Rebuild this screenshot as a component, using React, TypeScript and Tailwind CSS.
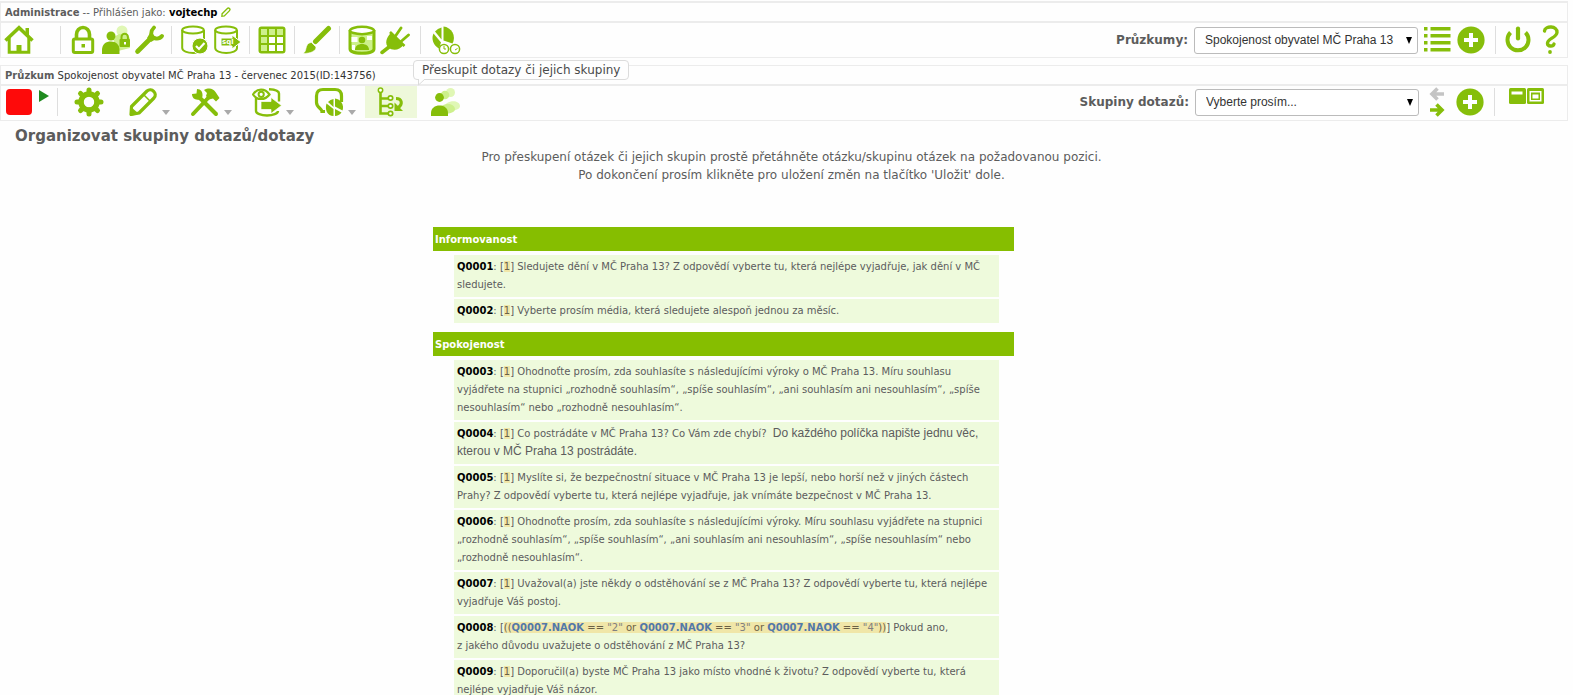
import React from 'react';

const GREEN = '#86be0a';
const LIGHT = '#cdf08c';

interface IconProps {
  children: React.ReactNode;
}

// Shared 30x30 canvas for the toolbar drawings
const Icon: React.FC<IconProps> = ({ children }) => (
  <svg width="30" height="30" viewBox="0 0 30 30" fill="none" className="shrink-0" aria-hidden="true">
    {children}
  </svg>
);

const HomeIcon = () => (
  <Icon>
    <path d="M1.5 15.5L15 2.8l13.5 12.7" stroke={GREEN} strokeWidth="3.6" />
    <path d="M21.5 3H25v8l-3.5-3z" fill={GREEN} />
    <path d="M5.2 13v14.3h19.6V13" stroke={GREEN} strokeWidth="3" />
    <path d="M12.5 20h5v6h-5z" fill={GREEN} />
  </Icon>
);

const LockIcon = () => (
  <Icon>
    <path d="M8.5 14V9.5a6.5 7 0 0 1 13 0V14" stroke={GREEN} strokeWidth="3.6" />
    <rect x="5.3" y="14" width="19.4" height="13.5" rx="1.5" stroke={GREEN} strokeWidth="3" />
    <rect x="13.5" y="19" width="3.5" height="3.5" fill={GREEN} />
  </Icon>
);

const UserLockIcon = () => (
  <Icon>
    <circle cx="21" cy="6" r="5.5" fill="#e0f7b5" />
    <path d="M12 14c4-7 15-7 17 0v9l-12 3z" fill={LIGHT} />
    <circle cx="10" cy="11" r="4.5" fill={GREEN} />
    <path d="M1 29v-4c0-6 4-8.5 9-8.5s8.5 3 8.5 8.5v4z" fill={GREEN} />
    <path d="M20.5 15v-3a3.2 3.2 0 0 1 6.4 0v3" stroke={GREEN} strokeWidth="2" />
    <rect x="18.5" y="14" width="10.5" height="8" rx="1" fill={GREEN} />
    <rect x="23" y="17" width="2" height="2.5" fill="#fff" />
  </Icon>
);

const WrenchIcon = () => (
  <Icon>
    <path d="M3.5 26.5L18 12" stroke={GREEN} strokeWidth="4.6" strokeLinecap="round" />
    <path d="M20 2.5c-4.500 4.500-3 10.500 2 11 2.500.3 4.500-.5 6-2.500" stroke={GREEN} strokeWidth="3.8" strokeLinecap="round" />
    <path d="M16 8l6 6-5 3-4-4z" fill={GREEN} />
  </Icon>
);

const Cylinder = () => (
  <>
    <ellipse cx="14" cy="5" rx="10.8" ry="3.5" stroke={GREEN} strokeWidth="2" />
    <path d="M3.2 5v18c0 3 5 5 11 5S25 26 25 23V5" stroke={GREEN} strokeWidth="2" />
  </>
);

const DbCheckIcon = () => (
  <Icon>
    <Cylinder />
    <circle cx="21" cy="21" r="8" fill={GREEN} stroke="#fff" />
    <path d="M17 21l3 3 5.5-6" stroke="#fff" strokeWidth="2.2" />
  </Icon>
);

const DbSqlIcon = () => (
  <Icon>
    <Cylinder />
    <path d="M9 13h11v-3l9 7-9 7v-3H9z" fill={GREEN} stroke="#fff" />
    <text x="10" y="19" fontSize="7" fontWeight="bold" fill="#fff" className="font-['DejaVu_Sans',sans-serif]">
      sql
    </text>
  </Icon>
);

const GridIcon = () => (
  <Icon>
    <rect x="1.5" y="1.5" width="27" height="27" rx="3" fill={GREEN} />
    {[4, 12, 20].map((y) =>
      [4, 12, 20].map((x) => (
        <rect key={`${x}-${y}`} x={x} y={y} width="6" height="6" fill={x === 4 || y === 4 ? LIGHT : '#fff'} />
      ))
    )}
  </Icon>
);

const BrushIcon = () => (
  <Icon>
    <path d="M13.5 16.5l13-13" stroke={GREEN} strokeWidth="5" strokeLinecap="round" />
    <path
      d="M9.5 17.5L14 22c0 4-5 6.5-13 6.500 3-2 2.500-4 3.500-7s3-4 5-4z"
      fill={GREEN}
      stroke="#fff"
      strokeWidth=".6"
    />
  </Icon>
);

const StorageIcon = () => (
  <Icon>
    <path d="M3 5v19c0 2.5 5 4.3 12 4.3S27 26.5 27 24V5" fill={LIGHT} stroke={GREEN} strokeWidth="3" />
    <ellipse cx="15" cy="5.5" rx="12" ry="3.7" fill="#fff" stroke={GREEN} strokeWidth="2.600" />
    <path d="M4.5 12h6v5h-6zM20 11h5v4h-5zM5 20h3v5H5z" fill="#fff" />
    <circle cx="15" cy="15" r="3.3" fill={GREEN} />
    <path d="M8 25c0-4 3-6 7-6s7 2 7 6z" fill={GREEN} />
  </Icon>
);

const PlugIcon = () => (
  <Icon>
    <path d="M2 27.500l7-5.500" stroke={GREEN} strokeWidth="3.500" strokeLinecap="round" />
    <path d="M11 8l12.500 12c-4 5.500-11 6-15 2.500S6 12.500 11 8z" fill={GREEN} />
    <path d="M10 7l14.500 14" stroke={GREEN} strokeWidth="2.600" />
    <path d="M15.500 11l5.500-8M21 16.500l7.500-6.500" stroke={GREEN} strokeWidth="2.800" strokeLinecap="round" />
  </Icon>
);

const PieClockIcon = () => (
  <Icon>
    <path d="M10.5 2.500v12L4 6.500a12 12 0 0 1 6.500-4z" fill={GREEN} />
    <path d="M12.5 1.500a11.500 11.500 0 0 1 9 17l-9-3z" fill={GREEN} />
    <path d="M2.5 8.500l7.500 9-2 6a11.500 11.500 0 0 1-5.500-15z" fill={GREEN} />
    <circle cx="13" cy="24" r="4.600" fill="#fff" stroke={GREEN} strokeWidth="1.500" />
    <circle cx="24" cy="24" r="4.600" fill="#fff" stroke={GREEN} strokeWidth="1.500" />
    <path d="M13 21v3h2M24 25l2.500-1.500" stroke={GREEN} />
  </Icon>
);

const GearIcon = () => (
  <Icon>
    {[0, 45, 90, 135].map((a) => (
      <path
        key={a}
        d="M15 3v4M15 27v-4"
        stroke={GREEN}
        strokeWidth="5"
        strokeLinecap="round"
        transform={`rotate(${a} 15 15)`}
      />
    ))}
    <circle cx="15" cy="15" r="8" stroke={GREEN} strokeWidth="5.500" />
  </Icon>
);

const PencilIcon = () => (
  <Icon>
    <path d="M3.500 19.500L19 4c4.500-4 11 2.500 7 7L11 26l-8 1.500z" stroke={GREEN} strokeWidth="3.200" strokeLinejoin="round" />
    <path d="M2 19l9 8-9 2z" fill={GREEN} />
    <path d="M16 8l6 6" stroke={GREEN} strokeWidth="1.500" />
  </Icon>
);

const ToolsIcon = () => (
  <Icon>
    <path d="M9.500 10.500L26 27" stroke={GREEN} strokeWidth="4" strokeLinecap="round" />
    <path d="M3 27L20 9" stroke={GREEN} strokeWidth="4" strokeLinecap="round" />
    <path d="M7 2l-.5 4.500L2 7c0 4 3 6.500 7.500 5.500l3-3C13 5 11 2 7 2z" fill={GREEN} />
    <path d="M14 3c5-2.500 9-1.500 11.500 2l4 6-3.500 3.500-3-3-4 1-3-3.500 1-3z" fill={GREEN} />
  </Icon>
);

const EyeExportIcon = () => (
  <Icon>
    <path d="M4 10v14c0 2.500 5 4.500 11 4.500s11-2 11-4.500M17 2.200c6 .3 10 1.800 10 4.300v8" stroke={GREEN} strokeWidth="2.400" />
    <path d="M1 7.500C5 1 13 1 17.500 7.500 13 13.500 5 13.500 1 7.500z" fill="#fff" stroke={GREEN} strokeWidth="2.200" />
    <circle cx="9.200" cy="7.300" r="2.600" stroke={GREEN} strokeWidth="2" />
    <path d="M9 14.500h10v-4l10.500 8-10.500 8v-4H9z" fill={GREEN} stroke="#fff" strokeWidth=".7" />
  </Icon>
);

const PieFrameIcon = () => (
  <Icon>
    <path
      d="M11 24.500H8c0-3-5.500-4-5.500-9V9c0-5 2.500-6.500 6.500-6.500h12c4 0 6.500 1.500 6.500 6.500v6"
      stroke={GREEN}
      strokeWidth="3.200"
    />
    <path d="M19.500 12v8L14 15a9 9 0 0 1 5.500-3z" fill={GREEN} />
    <path d="M21 11.500a9 9 0 0 1 7.500 12l-7.500-4z" fill={GREEN} />
    <path d="M12.500 16.500l7 5.500v7c-6 0-9-6-7-12.500z" fill={GREEN} />
    <path d="M21 22l6.500 3.500C26 27.500 23.500 29 21 29z" fill={GREEN} />
  </Icon>
);

const ReorderIcon = () => (
  <Icon>
    <path d="M4.500 5v21.500H12M4.500 11.500H12M4.500 19H12" stroke={GREEN} strokeWidth="2.600" />
    <circle cx="4.500" cy="3.200" r="2.200" fill="#fff" stroke={GREEN} strokeWidth="1.500" />
    <circle cx="14.500" cy="11" r="2.200" fill="#fff" stroke={GREEN} strokeWidth="1.700" />
    <circle cx="14.500" cy="19" r="2.200" fill="#fff" stroke={GREEN} strokeWidth="1.700" />
    <circle cx="14.500" cy="26.500" r="2.200" fill="#fff" stroke={GREEN} strokeWidth="1.700" />
    <path d="M20 11.500c6 0 7 5.500 2.500 9" stroke={GREEN} strokeWidth="3" />
    <path d="M18.500 15.500V24H27z" fill={GREEN} />
  </Icon>
);

const UsersIcon = () => (
  <Icon>
    <circle cx="20.500" cy="5.500" r="4.500" fill="#e0f7b5" />
    <path d="M14 21c0-7 15-10 16-2 0 3-4 4-8 5z" fill="#e0f7b5" />
    <circle cx="15" cy="8" r="4.300" fill={LIGHT} />
    <path d="M9 24c0-8 15-10 16-2 0 3-4 4-8 5z" fill={LIGHT} />
    <circle cx="9.500" cy="10.500" r="4.400" fill={GREEN} />
    <path d="M1 29v-3c0-5 4-7.500 8.500-7.500S18 21 18 26v3z" fill={GREEN} />
  </Icon>
);

const ListIcon = () => (
  <Icon>
    {[2, 9, 16, 23].map((y) => (
      <path key={y} d={`M1 ${y}h3.500v3.500h-3.500zM7.500 ${y}h20v3.500h-20z`} fill={GREEN} />
    ))}
  </Icon>
);

const PlusIcon = () => (
  <Icon>
    <circle cx="15" cy="15" r="13.600" fill={GREEN} />
    <path d="M15 8v14M8 15h14" stroke="#fff" strokeWidth="4" />
  </Icon>
);

const PowerIcon = () => (
  <Icon>
    <path d="M7.500 7.500a10.500 10.500 0 1 0 15 0" stroke={GREEN} strokeWidth="4" />
    <path d="M15 3.500v10" stroke={GREEN} strokeWidth="4.200" strokeLinecap="round" />
  </Icon>
);

const HelpIcon = () => (
  <Icon>
    <path
      d="M9.500 6C10 .5 22.500.5 22 7.500c-.5 5.500-10 6-9.500 11 .3 3 5.500 3.500 6.500.5"
      stroke={GREEN}
      strokeWidth="3.400"
      strokeLinecap="round"
    />
    <circle cx="15" cy="27" r="1.900" fill={GREEN} />
  </Icon>
);

const SwapIcon = () => (
  <Icon>
    <path d="M22 7H11M15.500 1.500L10 7l5.500 5.500" stroke="#c4c4c4" strokeWidth="3.600" />
    <path d="M8 23h11M14.500 17.500L20 23l-5.500 5.500" stroke={GREEN} strokeWidth="3.600" />
  </Icon>
);

const LayoutIcon = () => (
  <svg width="36" height="17" viewBox="0 0 36 17" fill="none" aria-hidden="true">
    <rect width="17" height="16" rx="1.500" fill={GREEN} />
    <path d="M2.500 3.500h11v3h-11z" fill="#fff" />
    <rect x="18" width="17" height="16" rx="1.500" fill={GREEN} />
    <path d="M20.500 3h12v10.500h-12z" fill="#fff" />
    <path d="M22 4.500h9v7.500h-9z" fill={GREEN} />
    <path d="M23.500 6.500h6v4h-6z" fill="#fff" />
  </svg>
);

interface ToolButtonProps {
  label: string;
  className?: string;
  children: React.ReactNode;
}

const ToolButton: React.FC<ToolButtonProps> = ({ label, className = 'w-[33px]', children }) => (
  <button type="button" aria-label={label} className={`flex h-8 shrink-0 items-center justify-center ${className}`}>
    {children}
  </button>
);

// Icon with the small grey caret of a drop-down menu
const MenuButton: React.FC<ToolButtonProps> = ({ label, children }) => (
  <button type="button" aria-label={label} className="flex h-8 w-[62px] shrink-0 items-center gap-1 pl-3">
    {children}
    <svg width="8" height="5" viewBox="0 0 8 5" className="mt-5" aria-hidden="true">
      <path d="M0 0h8L4 5z" fill="#aaa" />
    </svg>
  </button>
);

const Separator: React.FC<{ className?: string }> = ({ className = 'w-3' }) => (
  <div className={`flex h-7 shrink-0 justify-center ${className}`}>
    <div className="w-px bg-[#dedede]" />
  </div>
);

interface PickerProps {
  id: string;
  label: string;
  value: string;
}

const Picker: React.FC<PickerProps> = ({ id, label, value }) => (
  <>
    <label htmlFor={id} className="mr-1.5 text-[12px] font-bold whitespace-nowrap">
      {label}
    </label>
    <div className="relative">
      <select
        id={id}
        className="block h-[27px] w-56 appearance-none rounded-[3px] border border-[#bbb] bg-white pl-2.5 font-['Liberation_Sans',sans-serif] text-[12px] text-[#333]"
      >
        <option>{value}</option>
      </select>
      <svg width="6" height="7" viewBox="0 0 6 7" className="pointer-events-none absolute top-2.5 right-1.5" aria-hidden="true">
        <path d="M0 0h6L3 7z" fill="#000" />
      </svg>
    </div>
  </>
);

interface Question {
  code: string;
  condition?: React.ReactNode;
  text: React.ReactNode;
}

interface Group {
  title: string;
  questions: Question[];
}

const Var = () => <b className="text-[#5278a8]">Q0007.NAOK</b>;

const groups: Group[] = [
  {
    title: 'Informovanost',
    questions: [
      {
        code: 'Q0001',
        text: 'Sledujete dění v MČ Praha 13? Z odpovědí vyberte tu, která nejlépe vyjadřuje, jak dění v MČ sledujete.',
      },
      { code: 'Q0002', text: 'Vyberte prosím média, která sledujete alespoň jednou za měsíc.' },
    ],
  },
  {
    title: 'Spokojenost',
    questions: [
      {
        code: 'Q0003',
        text: 'Ohodnoťte prosím, zda souhlasíte s následujícími výroky o MČ Praha 13. Míru souhlasu vyjádřete na stupnici „rozhodně souhlasím“, „spíše souhlasím“, „ani souhlasím ani nesouhlasím“, „spíše nesouhlasím“ nebo „rozhodně nesouhlasím“.',
      },
      {
        code: 'Q0004',
        text: (
          <>
            Co postrádáte v MČ Praha 13? Co Vám zde chybí?&nbsp;{' '}
            <span className="font-['Liberation_Sans',sans-serif] text-[12px] leading-none">
              Do každého políčka napište jednu věc, kterou v MČ Praha 13 postrádáte.
            </span>
          </>
        ),
      },
      {
        code: 'Q0005',
        text: 'Myslíte si, že bezpečnostní situace v MČ Praha 13 je lepší, nebo horší než v jiných částech Prahy? Z odpovědí vyberte tu, která nejlépe vyjadřuje, jak vnímáte bezpečnost v MČ Praha 13.',
      },
      {
        code: 'Q0006',
        text: 'Ohodnoťte prosím, zda souhlasíte s následujícími výroky. Míru souhlasu vyjádřete na stupnici „rozhodně souhlasím“, „spíše souhlasím“, „ani souhlasím ani nesouhlasím“, „spíše nesouhlasím“ nebo „rozhodně nesouhlasím“.',
      },
      {
        code: 'Q0007',
        text: 'Uvažoval(a) jste někdy o odstěhování se z MČ Praha 13? Z odpovědí vyberte tu, která nejlépe vyjadřuje Váš postoj.',
      },
      {
        code: 'Q0008',
        condition: (
          <>
            ((
            <Var /> == <i className="text-[#808080] not-italic">"2"</i> or <Var /> =={' '}
            <i className="text-[#808080] not-italic">"3"</i> or <Var /> =={' '}
            <i className="text-[#808080] not-italic">"4"</i>))
          </>
        ),
        text: (
          <>
            Pokud ano,
            <br />
            z jakého důvodu uvažujete o odstěhování z MČ Praha 13?
          </>
        ),
      },
      {
        code: 'Q0009',
        text: 'Doporučil(a) byste MČ Praha 13 jako místo vhodné k životu? Z odpovědí vyberte tu, která nejlépe vyjadřuje Váš názor.',
      },
    ],
  },
];

const QuestionItem: React.FC<{ question: Question }> = ({ question }) => (
  <li className="cursor-move bg-[#eefadc] px-[3px] py-[3px] leading-[18px]">
    <b className="text-black">{question.code}</b>: [
    <span className="bg-[#f0e6a8] text-[#6b6145]">{question.condition ?? '1'}</span>] {question.text}
  </li>
);

const App: React.FC = () => {
  return (
    <div className="h-screen overflow-hidden bg-[#fefefe] pt-px font-['DejaVu_Sans',Verdana,sans-serif] text-[10px] text-[#5c5c5c]">
      {/* Administration bar */}
      <header className="mr-[5px] border border-t-2 border-[#ececec]">
        <div className="flex h-5 items-center border-b-2 border-[#ececec] pl-1">
          <p>
            <b>Administrace</b> -- Přihlášen jako: <b className="text-black">vojtechp</b>
          </p>
          <a href="#profile" aria-label="Upravit profil" className="ml-1">
            <svg width="10" height="10" viewBox="0 0 9 9" fill="none" aria-hidden="true">
              <path d="M1 6l4.500-4.500c1.500-1.500 3.500.5 2 2L3 8l-2.200.3z" stroke={GREEN} strokeWidth="1.200" />
            </svg>
          </a>
        </div>
        <div className="flex h-[34px] items-center">
          <ToolButton label="Domů" className="w-9">
            <HomeIcon />
          </ToolButton>
          <Separator className="w-[47px]" />
          <div className="-ml-[18px] flex items-center">
            <ToolButton label="Oprávnění">
              <LockIcon />
            </ToolButton>
            <ToolButton label="Uživatelé">
              <UserLockIcon />
            </ToolButton>
            <ToolButton label="Nastavení">
              <WrenchIcon />
            </ToolButton>
            <Separator />
            <ToolButton label="Kontrola dat">
              <DbCheckIcon />
            </ToolButton>
            <ToolButton label="Záloha databáze">
              <DbSqlIcon />
            </ToolButton>
            <Separator />
            <ToolButton label="Sady popisků">
              <GridIcon />
            </ToolButton>
            <Separator />
            <ToolButton label="Šablony">
              <BrushIcon />
            </ToolButton>
            <Separator />
            <ToolButton label="Databáze účastníků">
              <StorageIcon />
            </ToolButton>
            <ToolButton label="Moduly">
              <PlugIcon />
            </ToolButton>
            <Separator className="w-[18px]" />
            <ToolButton label="Statistiky">
              <PieClockIcon />
            </ToolButton>
          </div>
          <div className="ml-auto flex items-center pr-px">
            <Picker id="surveys" label="Průzkumy:" value="Spokojenost obyvatel MČ Praha 13" />
            <ToolButton label="Seznam průzkumů" className="ml-[3px] w-[33px]">
              <ListIcon />
            </ToolButton>
            <ToolButton label="Nový průzkum">
              <PlusIcon />
            </ToolButton>
            <Separator className="w-4" />
            <ToolButton label="Odhlásit" className="w-[30px]">
              <PowerIcon />
            </ToolButton>
            <ToolButton label="Nápověda">
              <HelpIcon />
            </ToolButton>
          </div>
        </div>
      </header>

      {/* Survey bar */}
      <nav className="mt-[7px] mr-[5px] border border-[#ececec]">
        <div className="flex h-5 items-center border-b-2 border-[#ececec] pl-1">
          <p>
            <b>Průzkum</b> <span className="text-[#333]">Spokojenost obyvatel MČ Praha 13 - červenec 2015(ID:143756)</span>
          </p>
        </div>
        <div className="flex h-[34px] items-start">
          <div className="flex h-8 items-center">
            <button type="button" aria-label="Zastavit průzkum" className="ml-[5px] size-[26px] rounded-sm bg-[#fe0a0a]" />
            <button type="button" aria-label="Spustit průzkum" className="mb-3 ml-1.5">
              <svg width="11" height="12" viewBox="0 0 11 12" aria-hidden="true">
                <path d="M1 0l10 6-10 6z" fill="#1f8a1f" />
              </svg>
            </button>
            <Separator className="w-[17px]" />
            <ToolButton label="Vlastnosti průzkumu" className="w-[45px]">
              <GearIcon />
            </ToolButton>
          </div>
          <div className="ml-[5px] flex items-center">
            <MenuButton label="Upravit">
              <PencilIcon />
            </MenuButton>
            <MenuButton label="Nástroje">
              <ToolsIcon />
            </MenuButton>
            <MenuButton label="Zobrazit a exportovat">
              <EyeExportIcon />
            </MenuButton>
            <MenuButton label="Odpovědi">
              <PieFrameIcon />
            </MenuButton>
            <div className="relative mx-px">
              <ToolButton label="Přeskupit dotazy" className="w-[52px] bg-[#eef8da]">
                <ReorderIcon />
              </ToolButton>
              <div
                role="tooltip"
                className="absolute bottom-full left-12 mb-1.5 rounded border border-[#dcdcdc] bg-[#fefefe] px-2 text-[12px] leading-[18px] whitespace-nowrap text-[#4a4a4a]"
              >
                Přeskupit dotazy či jejich skupiny
                <svg width="8" height="7" viewBox="0 0 8 7" className="absolute top-full left-1" aria-hidden="true">
                  <path d="M0 0v6l7-6z" fill="#fefefe" />
                  <path d="M.5 0v6L7 0" fill="none" stroke="#dcdcdc" />
                </svg>
              </div>
            </div>
            <ToolButton label="Účastníci" className="w-[54px]">
              <UsersIcon />
            </ToolButton>
          </div>
          <div className="ml-auto flex h-8 items-center pr-[22px]">
            <Picker id="groups" label="Skupiny dotazů:" value="Vyberte prosím..." />
            <ToolButton label="Předchozí a další skupina" className="ml-px w-[33px]">
              <SwapIcon />
            </ToolButton>
            <ToolButton label="Nová skupina">
              <PlusIcon />
            </ToolButton>
            <Separator className="w-4" />
            <button type="button" aria-label="Rozložení panelů" className="mb-3 ml-[7px]">
              <LayoutIcon />
            </button>
          </div>
        </div>
      </nav>

      <main className="mr-[5px] pl-[15px]">
        <h1 className="pt-1.5 text-[15px] leading-[18px] font-bold">Organizovat skupiny dotazů/dotazy</h1>
        <p className="mt-[3px] text-center text-[12px] leading-[18px]">
          Pro přeskupení otázek či jejich skupin prostě přetáhněte otázku/skupinu otázek na požadovanou pozici.
          <br />
          Po dokončení prosím klikněte pro uložení změn na tlačítko 'Uložit' dole.
        </p>
        <div className="flex justify-center pt-[43px] pr-34">
          <ul className="flex w-full max-w-[581px] flex-col gap-[9px]">
            {groups.map((group) => (
              <li key={group.title}>
                <h2 className="cursor-move bg-[#86be00] px-0.5 pt-1 pb-0.5 leading-[18px] font-bold text-white">
                  {group.title}
                </h2>
                <ul className="mt-1 mr-[15px] ml-[21px] flex flex-col gap-0.5">
                  {group.questions.map((question) => (
                    <QuestionItem key={question.code} question={question} />
                  ))}
                </ul>
              </li>
            ))}
          </ul>
        </div>
      </main>
    </div>
  );
};

export default App;
